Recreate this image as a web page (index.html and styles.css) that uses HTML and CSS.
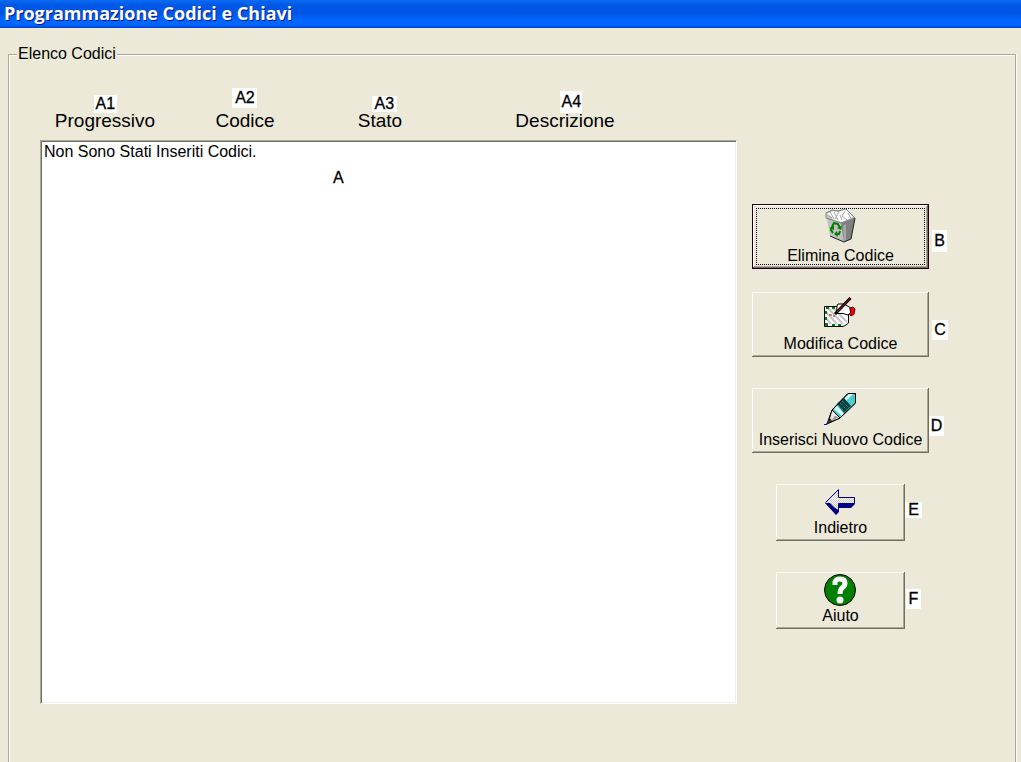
FILE: index.html
```html
<!DOCTYPE html>
<html lang="it">
<head>
<meta charset="utf-8">
<title>Programmazione Codici e Chiavi</title>
<link rel="stylesheet" href="styles.css">
</head>
<body>
<header class="titlebar"><h1>Programmazione Codici e Chiavi</h1></header>
<fieldset class="group">
  <legend>Elenco Codici</legend>
  <div class="content">
    <section class="codes">
      <div class="columns">
        <div class="column"><span class="heading">Progressivo<span class="tag tag-a1">A1</span></span></div>
        <div class="column"><span class="heading">Codice<span class="tag tag-a2">A2</span></span></div>
        <div class="column"><span class="heading">Stato<span class="tag tag-a3">A3</span></span></div>
        <div class="column"><span class="heading">Descrizione<span class="tag tag-a4">A4</span></span></div>
      </div>
      <div class="list">Non Sono Stati Inseriti Codici.<span class="tag tag-a">A</span></div>
    </section>
    <div class="actions">
      <div class="action">
        <button type="button" class="btn focused">
          <svg class="icon" viewBox="0 0 34 32" aria-hidden="true">
            <path d="M2 4L8 1L15 1L22 0L27 5L31 9L27 30L20 33L6 27Z" fill="#c0c0c0"/>
            <path d="M17 14L31 9L27 30L20 33Z" fill="#808080"/>
            <path d="M19 17L22 15L22 31L20 32Z" fill="#a8a8a8"/>
            <path d="M3 5L9 2L14 3L22 0L29 8L18 13L10 11Z" fill="#fff"/>
            <path d="M2 4L8 1L14 2L22 0L27 5L31 9L17 14L2 9Z" fill="none" stroke="#808080"/>
            <path d="M6 3L10 10M10 3L14 11M15 3L11 10M16 6L18 11M21 2L18 7L23 11M24 4L27 9M4 6L8 9" fill="none" stroke="#a0a0a0"/>
            <path d="M31 9L27 30L20 33L6 27" fill="none" stroke="#202020"/>
            <path d="M8 18L10 14L14 15L16 19M16 22L15 25L12 25M9 24L7 21L8 18" fill="none" stroke="#008000" stroke-width="2"/>
            <path d="M13 19L18 17L17 21ZM13 22L10 25L14 28ZM5 19L10 17L10 21Z" fill="#008000"/>
          </svg>
          <span>Elimina Codice</span>
        </button>
        <span class="tag tag-b">B</span>
      </div>
      <div class="action">
        <button type="button" class="btn">
          <svg class="icon" viewBox="0 0 34 32" aria-hidden="true">
            <path d="M0.500 9.500H13L24.500 18V26L22 28L19 29.500H0.500Z" fill="#fff" stroke="#000"/>
            <path d="M4 11L19 27M9 11L23 25M2 15L13 27M2 21L7 27" stroke="#c4c4c4" stroke-width="2"/>
            <path d="M2 10h3v2H2ZM8 10h3v2H8ZM1 14h2v3H1ZM1 20h2v3H1ZM1 26h3v3H1ZM8 27h3v2H8ZM14 27h3v2H14Z" fill="#008000"/>
            <path d="M13 9L14 7L20 7L26 10.500L26.500 16L24 18L19 16.500H12.500Z" fill="#fff" stroke="#000"/>
            <path d="M26 11L29 10L31 12L30 17L27 19L25.500 17L27 15Z" fill="#f00" stroke="#500000"/>
            <path d="M26.500 1L11 17" stroke="#000" stroke-width="3"/>
            <path d="M26 1.500L13 15" stroke="#c01818"/>
            <path d="M5 18H8M9 19H11" stroke="#c00000"/>
          </svg>
          <span>Modifica Codice</span>
        </button>
        <span class="tag tag-c">C</span>
      </div>
      <div class="action">
        <button type="button" class="btn">
          <svg class="icon" viewBox="0 0 34 32" aria-hidden="true">
            <path d="M24 0.500H31.500V10L16 25L3 31L8 17Z" fill="#48c8c8" stroke="#000"/>
            <path d="M17 8L23 2L31 10L24 18Z" fill="#50d0d0"/>
            <path d="M20 6L25 1H29L22 8ZM10 16L13 13L20 20L18 23Z" fill="#d8ffff"/>
            <path d="M13 11L20 5L27 13L20 20Z" fill="#004040"/>
            <path d="M14 12L21 19M16 10L23 17M18 8L25 15" stroke="#58a8a8" stroke-dasharray="1 1"/>
            <path d="M8 17L16 25L4 30Z" fill="#e8e8e8" stroke="#000"/>
            <path d="M11 23L14 24L7 28Z" fill="#909090"/>
            <path d="M6 25L8 28L2 31Z" fill="#303030"/>
            <path d="M24 0.500H31.500V10L16 25L8 17Z" fill="none" stroke="#000"/>
            <path d="M0 31.500H3" stroke="#00f"/>
          </svg>
          <span>Inserisci Nuovo Codice</span>
        </button>
        <span class="tag tag-d">D</span>
      </div>
      <div class="action small">
        <button type="button" class="btn">
          <svg class="icon" viewBox="0 0 34 32" aria-hidden="true">
            <defs>
              <pattern id="dither" width="2" height="2" patternUnits="userSpaceOnUse">
                <rect width="2" height="2" fill="#fff"/><path d="M0 0h1v1H0ZM1 1h1v1H1Z" fill="#c8c8c8"/>
              </pattern>
            </defs>
            <path d="M1 17L12 29L15 26V22H27L31 18V15H8Z" fill="#000080"/>
            <path d="M1.500 16.500L14.500 3.500V11.500H30.500V17.500H14.500V24Z" fill="url(#dither)"/>
            <path d="M14.500 24V17.500H30.500V11.500H14.500V3.500" fill="none" stroke="#000080"/>
            <path d="M14.500 3.500L1.500 16.500" stroke="#0000d0"/>
            <path d="M2 17L6 17L14 25L12 28Z" fill="#000080"/>
          </svg>
          <span>Indietro</span>
        </button>
        <span class="tag tag-e">E</span>
      </div>
      <div class="action small">
        <button type="button" class="btn">
          <svg class="icon" viewBox="0 0 34 32" aria-hidden="true">
            <circle cx="16" cy="16" r="15.500" fill="#008000" stroke="#000"/>
            <path d="M11 11V8Q12 5 16 5Q21 5 21 9Q21 12 18 14Q16 16 16 20" fill="none" stroke="#fff" stroke-width="5"/>
            <circle cx="16" cy="26" r="3.500" fill="#fff"/>
          </svg>
          <span>Aiuto</span>
        </button>
        <span class="tag tag-f">F</span>
      </div>
    </div>
  </div>
</fieldset>
</body>
</html>
```
FILE: styles.css
```css
* { box-sizing: border-box; }
body {
  margin: 0;
  height: 100vh;
  display: flex;
  flex-direction: column;
  overflow: hidden;
  background: #ece9d8;
  color: #000;
  font: 16px/18px "Liberation Sans", Arial, sans-serif;
}
.titlebar {
  height: 28px;
  flex: none;
  padding-left: 4px;
  background: linear-gradient(#0a6cf5 0, #0058e6 5px, #0055e5 13px, #0066ff 20px, #0066ff 25px, #003dd0 28px);
}
.titlebar h1 {
  margin: 0;
  color: #fff;
  font: bold 18px/27px "Open Sans", "Noto Sans", sans-serif;
  text-shadow: 1px 1px #0a1883;
}
.group {
  flex: 1;
  display: flex;
  flex-direction: column;
  min-width: 0;
  margin: 17px 5px 0 8px;
  padding: 0 86px 0 31px;
  border: 1px solid #aca899;
  border-bottom: 0;
  box-shadow: inset 1px 1px #fff, 1px 0 #fff;
}
.group legend {
  margin-left: -23px;
  padding: 0 1px;
  background: #ece9d8;
}
.content {
  flex: 1;
  display: flex;
  gap: 15px;
  padding: 50px 0 58px;
}
.codes {
  flex: 1;
  min-width: 0;
  display: flex;
  flex-direction: column;
  gap: 11px;
}
.columns {
  display: grid;
  grid-template-columns: 130fr 150fr 120fr 250fr 47fr;
  font-size: 19px;
  line-height: 16px;
}
.column { display: flex; justify-content: center; }
.heading { position: relative; }
.list {
  position: relative;
  flex: 1;
  padding: 2px 3px;
  background: #fff;
  border: 1px solid;
  border-color: #aca899 #fff #fff #aca899;
  box-shadow: inset 1px 1px #716f64, inset -1px -1px #f1efe2;
}
.actions {
  flex: none;
  width: 177px;
  padding-top: 91px;
  display: flex;
  flex-direction: column;
  gap: 31px;
}
.action { position: relative; }
.action:first-child { margin-bottom: -8px; }
.action.small { margin: 0 24px; }
.btn {
  position: relative;
  width: 100%;
  padding: 5px 0 3px;
  display: flex;
  flex-direction: column;
  align-items: center;
  gap: 5px;
  border: 0;
  background: #ece9d8;
  color: #000;
  font: inherit;
  line-height: 20px;
  white-space: nowrap;
  box-shadow: inset -1px -1px #716f64, inset 1px 1px #fff, inset -2px -2px #aca899;
}
.small .btn { padding-top: 2px; gap: 0; }
.btn.focused {
  box-shadow: inset 0 0 0 1px #200010, inset -2px -2px #716f64, inset 2px 2px #fff, inset -3px -3px #aca899;
}
.btn.focused::after {
  content: "";
  position: absolute;
  inset: 4px;
  border: 1px dotted #000;
}
.icon { width: 34px; height: 32px; overflow: visible; }
.tag {
  position: absolute;
  background: #fff;
  font-size: 16px;
  line-height: 18px;
  text-align: center;
  -webkit-text-stroke: 0.3px #000;
}
.tag-a1 { left: 39px; top: -18px; width: 23px; }
.tag-a2 { left: 17px; top: -25px; width: 25px; line-height: 20px; }
.tag-a3 { left: 14px; top: -17px; width: 25px; line-height: 16px; }
.tag-a4 { left: 45px; top: -22px; width: 22px; line-height: 22px; }
.tag-a { left: 292px; top: 28px; }
.tag-b { left: 180px; top: 26px; width: 15px; line-height: 22px; }
.tag-c { left: 180px; top: 28px; width: 16px; line-height: 20px; }
.tag-d { left: 177px; top: 28px; width: 15px; line-height: 20px; }
.tag-e { left: 129px; top: 18px; width: 17px; line-height: 16px; }
.tag-f { left: 130px; top: 17px; width: 15px; line-height: 20px; }
```
